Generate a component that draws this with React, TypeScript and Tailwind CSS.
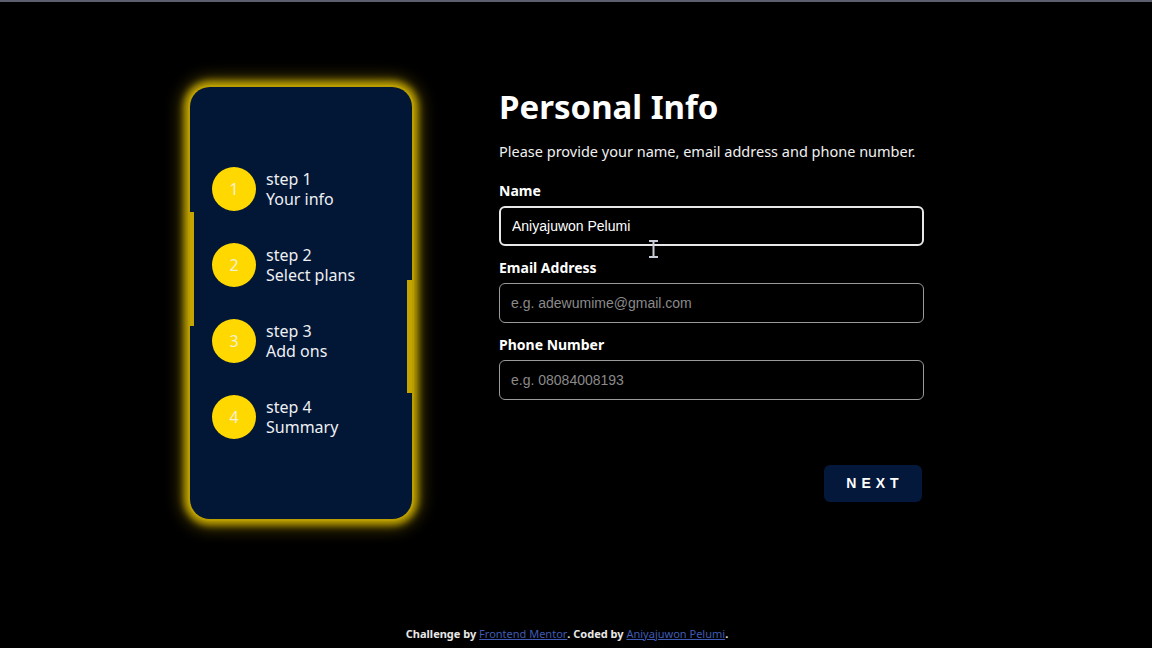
import React from 'react';

const steps = [
  { n: 1, title: 'Your info' },
  { n: 2, title: 'Select plans' },
  { n: 3, title: 'Add ons' },
  { n: 4, title: 'Summary' },
];

const Field = ({ label, placeholder, value, focused }: { label: string; placeholder: string; value?: string; focused?: boolean }) => (
  <div className="flex flex-col">
    <label className="text-[14px] font-bold leading-[20px] text-white">{label}</label>
    <input
      readOnly
      defaultValue={value}
      placeholder={placeholder}
      className={`mt-[5px] h-[40px] w-[425px] rounded-[6px] bg-black px-[11px] text-[14px] text-white placeholder:text-[#8a8a8a] outline-none ${
        focused ? 'border-2 border-[#e8e8e8] px-[10px]' : 'border border-[#9a9a9a]'
      }`}
      style={{ fontFamily: '"Liberation Sans", Arial, sans-serif' }}
    />
  </div>
);

export default function App() {
  return (
    <div
      className="relative flex h-[648px] w-full flex-col overflow-hidden bg-black"
      style={{ fontFamily: '"Noto Sans", "Open Sans", sans-serif' }}
    >
      <div className="h-[2px] w-full bg-[#5c5f6e]" />

      <div className="flex flex-1 pl-[190px] pt-[85px]">
        {/* sidebar */}
        <div className="relative h-[432px] w-[222px] rounded-[20px] bg-[#021636] shadow-[0_0_0_2px_#b89c00,0_0_7px_6px_rgba(200,170,0,0.9),0_0_16px_9px_rgba(150,125,0,0.55)]">
          <div className="absolute left-0 top-[125px] h-[114px] w-[4px] bg-[#c4a500]" />
          <div className="absolute right-0 top-[193px] h-[113px] w-[5px] bg-[#c4a500]" />
          <div className="flex flex-col gap-[32px] pl-[22px] pt-[80px]">
            {steps.map((s) => (
              <div key={s.n} className="flex items-center">
                <div className="flex h-[44px] w-[44px] items-center justify-center rounded-full bg-[#ffd800] text-[16px] text-[#f4f0d8]">
                  {s.n}
                </div>
                <div className="ml-[10px] flex flex-col text-[16px] leading-[20px] text-[#eef0f2]">
                  <span>step {s.n}</span>
                  <span>{s.title}</span>
                </div>
              </div>
            ))}
          </div>
        </div>

        {/* form */}
        <div className="ml-[87px] flex w-[425px] flex-col">
          <h1 className="text-[33px] font-bold leading-[40px] text-white">Personal Info</h1>
          <p className="mt-[14px] whitespace-nowrap text-[14.5px] leading-[20px] text-[#f0f0f0]">
            Please provide your name, email address and phone number.
          </p>
          <div className="mt-[20px] flex flex-col gap-[12px]">
            <Field label="Name" placeholder="e.g. Stephen King" value="Aniyajuwon Pelumi" focused />
            <Field label="Email Address" placeholder="e.g. adewumime@gmail.com" />
            <Field label="Phone Number" placeholder="e.g. 08084008193" />
          </div>
          <div className="mt-[65px] flex justify-end pr-[2px]">
            <button className="h-[37px] w-[98px] rounded-[6px] bg-[#03183a] pl-[4px] text-[14px] font-bold tracking-[5px] text-white" style={{ fontFamily: '"Liberation Sans", Arial, sans-serif' }}>
              NEXT
            </button>
          </div>
        </div>
      </div>

      {/* text cursor */}
      <svg className="absolute left-[648px] top-[240px]" width="11" height="18" viewBox="0 0 11 18">
        <path d="M1 1h9M1 17h9M5.5 1v16" stroke="#c8ccd8" strokeWidth="2" fill="none" />
      </svg>

      <p className="pb-[6px] pr-[18px] text-center text-[11px] font-bold text-[#e8e8e8]">
        Challenge by <a className="font-normal text-[#3f5bb5] underline">Frontend Mentor</a>. Coded by{' '}
        <a className="font-normal text-[#3f5bb5] underline">Aniyajuwon Pelumi</a>.
      </p>
    </div>
  );
}
